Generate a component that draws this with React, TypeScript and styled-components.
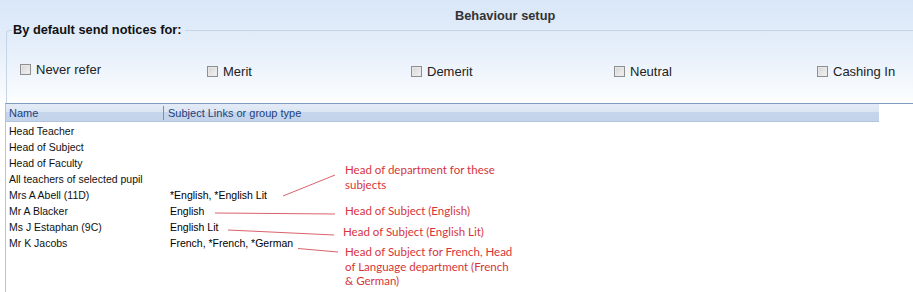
import React from 'react';
import styled, { createGlobalStyle } from 'styled-components';

const GlobalStyle = createGlobalStyle`
  html, body {
    margin: 0;
    padding: 0;
    background: #ffffff;
  }
  body {
    font-family: "Liberation Sans", Arial, sans-serif;
  }
`;

const Page = styled.div`
  position: relative;
  width: 913px;
  height: 292px;
  overflow: hidden;
  background: linear-gradient(to bottom, #d9e7f8 0px, #e6effa 50px, #fbfdff 100px, #ffffff 103px);
`;

const TitleBar = styled.div`
  height: 31px;
  padding: 0 0 1px 455px;
  box-sizing: border-box;
  display: flex;
  align-items: center;
  font-size: 12.8px;
  font-weight: bold;
  color: #333333;
`;

const Group = styled.fieldset`
  margin: -8px 0 0 6px;
  padding: 0;
  height: 80px;
  box-sizing: border-box;
  border: 1px solid #c6d5e6;
  border-right: none;
  border-bottom: none;
  border-top-left-radius: 4px;
`;

const Legend = styled.legend`
  margin-left: 5px;
  padding: 0 3px 0 1px;
  font-size: 12.8px;
  font-weight: bold;
  color: #111111;
  line-height: 14px;
`;

const Options = styled.div`
  display: grid;
  grid-template-columns: 187px 204px 203px 203px auto;
  padding: 27px 0 0 13px;
`;

const Option = styled.label<{ $lift?: number }>`
  display: flex;
  align-items: center;
  gap: 5px;
  font-size: 13px;
  color: #222222;
  position: relative;
  top: ${p => -(p.$lift || 0)}px;
`;

const Box = styled.span`
  width: 9px;
  height: 9px;
  border: 1px solid #8f8f8f;
  background: linear-gradient(135deg, #d4d4d4, #f4f4f4);
  box-shadow: inset 0 0 0 1px #e8e8e8;
`;

const List = styled.div`
  margin-left: 5px;
  border-top: 1px solid #7e9cc0;
  border-left: 1px solid #a9c5ea;
  height: 189px;
  background: #ffffff;
`;

const Header = styled.div`
  width: 873px;
  height: 18px;
  display: grid;
  grid-template-columns: 157px 1fr;
  background: linear-gradient(to bottom, #e3ebf6 0%, #dce6f3 45%, #c5d6ec 50%, #c3d4ea 100%);
  border-bottom: 1px solid #b3c5de;
  box-sizing: border-box;
`;

const HeadCell = styled.div<{ $sep?: boolean }>`
  display: flex;
  align-items: center;
  padding-left: ${p => (p.$sep ? '4px' : '3px')};
  font-size: 11px;
  color: #1f3e7c;
  border-left: ${p => (p.$sep ? '1px solid #6e90c2' : 'none')};
  height: 14px;
  align-self: center;
`;

const Rows = styled.div`
  padding-top: 1px;
`;

const Row = styled.div`
  display: grid;
  grid-template-columns: 164px 1fr;
  height: 16px;
  align-items: center;
  font-size: 10.5px;
  color: #111111;
`;

const NameCell = styled.div`
  padding-left: 3px;
`;

const LinkCell = styled.div`
  color: #000000;
`;

const Notes = styled.svg`
  position: absolute;
  left: 0;
  top: 0;
  pointer-events: none;
`;

const Note = styled.div<{ $x: number; $y: number }>`
  position: absolute;
  left: ${p => p.$x}px;
  top: ${p => p.$y}px;
  font-family: Lato, "Open Sans", sans-serif;
  font-size: 11.5px;
  line-height: 14.5px;
  color: #d6343c;
  white-space: nowrap;
`;

const options = [
  { label: 'Never refer', lift: 2 },
  { label: 'Merit', lift: 0 },
  { label: 'Demerit', lift: 0 },
  { label: 'Neutral', lift: 0 },
  { label: 'Cashing In', lift: 0 },
];

const rows = [
  ['Head Teacher', ''],
  ['Head of Subject', ''],
  ['Head of Faculty', ''],
  ['All teachers of selected pupil', ''],
  ['Mrs A Abell (11D)', '*English, *English Lit'],
  ['Mr A Blacker', 'English'],
  ['Ms J Estaphan (9C)', 'English Lit'],
  ['Mr K Jacobs', 'French, *French, *German'],
];

const notes = [
  { x: 345, y: 163, text: ['Head of department for these', 'subjects'] },
  { x: 345, y: 204, text: ['Head of Subject (English)'] },
  { x: 343, y: 225, text: ['Head of Subject (English Lit)'] },
  { x: 345, y: 245, text: ['Head of Subject for French, Head', 'of Language department (French', '& German)'] },
];

export default function App() {
  return (
    <Page>
      <GlobalStyle />
      <TitleBar>Behaviour setup</TitleBar>
      <Group>
        <Legend>By default send notices for:</Legend>
        <Options>
          {options.map(o => (
            <Option key={o.label} $lift={o.lift}>
              <Box />
              {o.label}
            </Option>
          ))}
        </Options>
      </Group>
      <List>
        <Header>
          <HeadCell>Name</HeadCell>
          <HeadCell $sep>Subject Links or group type</HeadCell>
        </Header>
        <Rows>
          {rows.map(([name, link]) => (
            <Row key={name}>
              <NameCell>{name}</NameCell>
              <LinkCell>{link}</LinkCell>
            </Row>
          ))}
        </Rows>
      </List>
      <Notes width="913" height="292" viewBox="0 0 913 292">
        <g stroke="#d9636c" strokeWidth="1" fill="none">
          <line x1="283" y1="196" x2="335" y2="175" />
          <line x1="215" y1="213" x2="335" y2="214" />
          <line x1="228" y1="230" x2="334" y2="235" />
          <line x1="298" y1="248.5" x2="338" y2="252" />
        </g>
      </Notes>
      {notes.map(n => (
        <Note key={n.y} $x={n.x} $y={n.y}>
          {n.text.map(t => (
            <div key={t}>{t}</div>
          ))}
        </Note>
      ))}
    </Page>
  );
}
